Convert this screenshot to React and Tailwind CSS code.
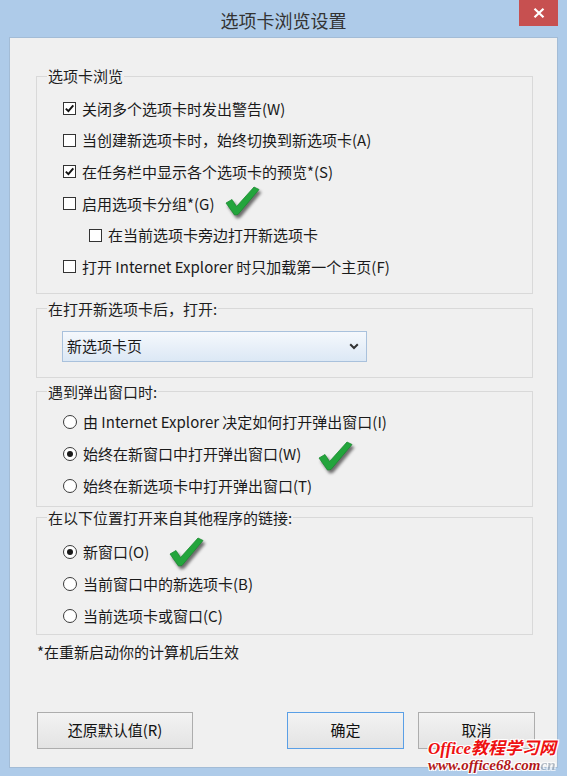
import React from "react";

const FONT = "font-[family-name:'Noto_Sans_CJK_SC',sans-serif]";

function Checkbox({ checked }) {
  return (
    <span className="w-[13px] h-[13px] border border-[#333333] bg-white flex items-center justify-center shrink-0">
      {checked && (
        <svg width="11" height="11" viewBox="0 0 11 11">
          <path d="M1.8 5.6 L4.4 8.2 L9.3 2.3" stroke="#111" strokeWidth="1.9" fill="none" />
        </svg>
      )}
    </span>
  );
}

function Radio({ checked }) {
  return (
    <span className="w-[14px] h-[14px] rounded-full border border-[#3a3a3a] bg-white flex items-center justify-center shrink-0">
      {checked && <span className="w-[6px] h-[6px] rounded-full bg-[#1a1a1a]" />}
    </span>
  );
}

function Tick({ className }) {
  return (
    <span className={"absolute " + className}>
      <svg width="38" height="34" viewBox="0 0 38 34" className="drop-shadow-[2px_3px_1.5px_rgba(0,0,0,0.55)]">
        <path
          d="M2 19 L8 15.5 L12.5 22.5 L30 3 L35 5.5 L14 30.5 L10.5 31 Z"
          fill="#23a53c"
          stroke="#1b8a30"
          strokeWidth="0.8"
          strokeLinejoin="round"
        />
      </svg>
    </span>
  );
}

function CheckRow({ checked, children, indent, after }) {
  return (
    <div className={"h-[31.6px] flex items-center gap-[6px] " + (indent ? "pl-[26px]" : "")}>
      <Checkbox checked={checked} />
      <span className="leading-[20px] whitespace-nowrap">{children}</span>
      {after}
    </div>
  );
}

function RadioRow({ checked, children, after }) {
  return (
    <div className="h-[32px] flex items-center gap-[6px]">
      <Radio checked={checked} />
      <span className="leading-[20px] whitespace-nowrap">{children}</span>
      {after}
    </div>
  );
}

function Legend({ children }) {
  return (
    <legend className="ml-[10px] px-[1px] text-[15px] leading-[20px] text-[#1e1e1e]">{children}</legend>
  );
}

function Button({ children, className }) {
  return (
    <div
      className={
        "h-[37px] flex items-center justify-center border bg-gradient-to-b from-[#f3f3f3] to-[#e3e3e3] text-[15px] text-[#111] " +
        className
      }
    >
      {children}
    </div>
  );
}

export default function App() {
  return (
    <div className={"w-[567px] h-[776px] bg-[#aecbe9] flex flex-col relative overflow-hidden text-[15px] text-[#1a1a1a] " + FONT}>
      {/* Title bar */}
      <div className="h-[37px] shrink-0 flex items-center justify-center pt-[3px] relative">
        <span className="text-[18px] leading-[24px] text-[#333]">选项卡浏览设置</span>
        <div className="absolute top-0 right-[9px] w-[39px] h-[26px] bg-[#c75050] flex items-center justify-center">
          <svg width="12" height="10" viewBox="0 0 12 10">
            <path d="M1.5 0.8 L10.5 9.2 M10.5 0.8 L1.5 9.2" stroke="#fff" strokeWidth="2.2" />
          </svg>
        </div>
      </div>

      {/* Panel */}
      <div className="mx-[9px] mb-[8px] flex-1 border border-[#a3bcd6] bg-[#f0f0f0] flex flex-col pl-[26px] pr-[24px] pt-[28px]">
        {/* Group 1 */}
        <fieldset className="border border-[#d9d9d9] m-0 p-0 min-w-0">
          <Legend>选项卡浏览</Legend>
          <div className="pl-[26px] pt-[7px] pb-[10px] flex flex-col">
            <CheckRow checked>关闭多个选项卡时发出警告(W)</CheckRow>
            <CheckRow>当创建新选项卡时，始终切换到新选项卡(A)</CheckRow>
            <CheckRow checked>在任务栏中显示各个选项卡的预览*(S)</CheckRow>
            <CheckRow
              after={
                <span className="relative w-0 h-0">
                  <Tick className="left-[4px] -top-[20px]" />
                </span>
              }
            >
              启用选项卡分组*(G)
            </CheckRow>
            <CheckRow indent>在当前选项卡旁边打开新选项卡</CheckRow>
            <CheckRow>打开 Internet Explorer 时只加载第一个主页(F)</CheckRow>
          </div>
        </fieldset>

        {/* Group 2 */}
        <fieldset className="border border-[#d9d9d9] m-0 p-0 min-w-0 mt-[5px]">
          <Legend>在打开新选项卡后，打开:</Legend>
          <div className="pl-[25px] pt-[12px] pb-[15px]">
            <div className="w-[305px] h-[31px] border border-[#a9c1dc] bg-gradient-to-b from-[#f5f8fc] to-[#dce8f5] flex items-center pl-[4px] pr-[7px]">
              <span className="flex-1 leading-[20px]">新选项卡页</span>
              <svg width="10" height="7" viewBox="0 0 10 7">
                <path d="M1.2 1.2 L5 5 L8.8 1.2" stroke="#333" strokeWidth="2" fill="none" />
              </svg>
            </div>
          </div>
        </fieldset>

        {/* Group 3 */}
        <fieldset className="border border-[#d9d9d9] m-0 p-0 min-w-0 mt-[4px]">
          <Legend>遇到弹出窗口时:</Legend>
          <div className="pl-[26px] pt-[4px] pb-[4px] flex flex-col">
            <RadioRow>由 Internet Explorer 决定如何打开弹出窗口(I)</RadioRow>
            <RadioRow
              checked
              after={
                <span className="relative w-0 h-0">
                  <Tick className="left-[10px] -top-[15px]" />
                </span>
              }
            >
              始终在新窗口中打开弹出窗口(W)
            </RadioRow>
            <RadioRow>始终在新选项卡中打开弹出窗口(T)</RadioRow>
          </div>
        </fieldset>

        {/* Group 4 */}
        <fieldset className="border border-[#d9d9d9] m-0 p-0 min-w-0 mt-[1px]">
          <Legend>在以下位置打开来自其他程序的链接:</Legend>
          <div className="pl-[26px] pt-[8px] pb-[2px] flex flex-col">
            <RadioRow
              checked
              after={
                <span className="relative w-0 h-0">
                  <Tick className="left-[13px] -top-[17px]" />
                </span>
              }
            >
              新窗口(O)
            </RadioRow>
            <RadioRow>当前窗口中的新选项卡(B)</RadioRow>
            <RadioRow>当前选项卡或窗口(C)</RadioRow>
          </div>
        </fieldset>

        <div className="mt-[7px] ml-[1px] leading-[20px]">*在重新启动你的计算机后生效</div>

        {/* Buttons */}
        <div className="mt-[50px] flex items-center pl-[1px]">
          <Button className="w-[156px] border-[#adadad]">还原默认值(R)</Button>
          <div className="flex-1" />
          <Button className="w-[117px] border-[#5a9fe6]">确定</Button>
          <Button className="w-[117px] ml-[14px] border-[#adadad] mr-[-2px]">取消</Button>
        </div>
      </div>

      {/* Watermark overlay */}
      <div className="absolute left-[428px] top-[740px] flex flex-col italic font-bold font-[family-name:'Liberation_Serif','Noto_Sans_CJK_SC',serif] leading-none whitespace-nowrap">
        <span className="text-[17px] leading-[18px] text-[#ee1111] whitespace-nowrap [text-shadow:1px_1px_0_#fff,-1px_-1px_0_#fff,1px_-1px_0_#fff,-1px_1px_0_#fff]">
          Office教程学习网
        </span>
        <span className="text-[15px] leading-[15px] text-[#b21818] whitespace-nowrap [text-shadow:1px_1px_0_#fff,-1px_-1px_0_#fff,1px_-1px_0_#fff,-1px_1px_0_#fff]">
          www.office68.com<span className="text-[#9aa6b3] opacity-70">cn</span>
        </span>
      </div>
    </div>
  );
}
